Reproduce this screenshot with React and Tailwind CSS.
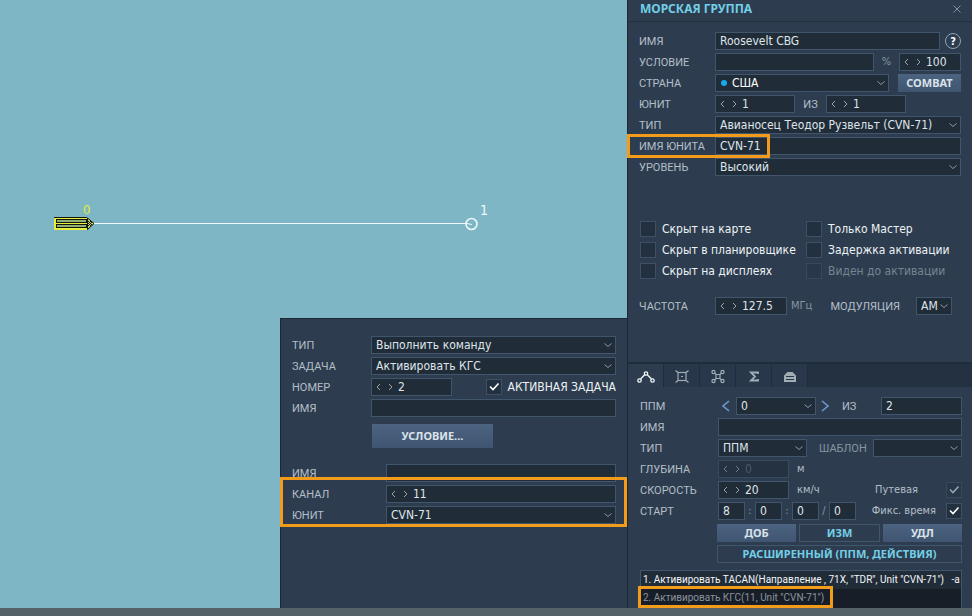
import { useId } from "react";

const fieldBox =
  "h-[18px] min-w-0 rounded-none border border-[#40566c] bg-[#212c39] text-xs leading-4 text-[#dfe5ea] outline-none";

function Caption({ children, className = "", color = "text-[#b4bfc9]", htmlFor }) {
  return (
    <label htmlFor={htmlFor} className={`shrink-0 whitespace-nowrap pt-0.5 font-[Roboto,sans-serif] text-[11px] leading-4 ${color} ${className}`}>
      {children}
    </label>
  );
}

function Row({ children, className = "" }) {
  return <div className={`flex h-[18px] items-center ${className}`}>{children}</div>;
}

function TextField({ id, value = "", label, className = "" }) {
  return <input id={id} aria-label={label} type="text" defaultValue={value} className={`${fieldBox} px-1 ${className}`} />;
}

function Chevron({ d, className = "" }) {
  return (
    <svg viewBox="0 0 8 8" className={`h-2 w-2 fill-none stroke-current ${className}`} aria-hidden="true">
      <path d={d} strokeWidth="1" />
    </svg>
  );
}

function Spinner({ id, value, label, className = "", disabled = false }) {
  return (
    <div className={`${fieldBox} flex items-center pl-[3px] ${className} ${disabled ? "opacity-60" : ""}`}>
      <button type="button" aria-label="−" disabled={disabled} className="text-[#98a5b1]">
        <Chevron d="M5 1 L2 4 L5 7" />
      </button>
      <button type="button" aria-label="+" disabled={disabled} className="ml-[3px] text-[#98a5b1]">
        <Chevron d="M3 1 L6 4 L3 7" />
      </button>
      <input
        id={id}
        aria-label={label}
        type="text"
        defaultValue={value}
        disabled={disabled}
        className={`ml-1 w-0 min-w-0 flex-1 bg-transparent outline-none ${disabled ? "text-[#5d6c7a]" : ""}`}
      />
    </div>
  );
}

function Select({ id, value, label, className = "", text = "text-[#c3ccd4]", pad = "pl-1", dot = false, disabled = false }) {
  return (
    <div className={`relative flex min-w-0 ${className}`}>
      <select id={id} aria-label={label} disabled={disabled} className={`${fieldBox} w-full appearance-none opacity-100 ${pad} ${text}`}>
        <option>{value}</option>
      </select>
      {dot && <span className="pointer-events-none absolute left-[6px] top-[6px] h-[6px] w-[6px] rounded-full bg-[#16a9ee]" />}
      <Chevron d="M0.5 2.5 L4 5.5 L7.5 2.5" className="pointer-events-none absolute right-1 top-[5px] text-[#8b98a5]" />
    </div>
  );
}

function Tick({ id, checked = false, dim = false }) {
  return (
    <span className="relative flex h-4 w-4 shrink-0">
      <input
        id={id}
        type="checkbox"
        defaultChecked={checked}
        className={`peer h-4 w-4 appearance-none border ${dim ? "border-[#38495b] bg-[#283749]" : "border-[#3d5065] bg-[#223040]"}`}
      />
      <svg
        viewBox="0 0 16 16"
        className={`pointer-events-none absolute inset-0 hidden fill-none stroke-current peer-checked:block ${dim ? "text-[#98a3ad]" : "text-white"}`}
        aria-hidden="true"
      >
        <path d="M4 7.5 L7 10.5 L12.5 4.5" strokeWidth="1.6" />
      </svg>
    </span>
  );
}

function Option({ children, disabled = false }) {
  const id = useId();
  return (
    <Row className="gap-1.5">
      <Tick id={id} dim={disabled} />
      <label htmlFor={id} className={`whitespace-nowrap text-xs leading-4 ${disabled ? "text-[#768492]" : "text-[#eef2f5]"}`}>
        {children}
      </label>
    </Row>
  );
}

const solid = "bg-linear-to-b from-[#4c6381] to-[#3f5571] text-[#dbe3ea]";
const outline = "border border-[#40566c] text-[#73cfe6]";

function Button({ children, height = "h-[18px]", className = "" }) {
  return (
    <button type="button" className={`flex ${height} items-center justify-center whitespace-nowrap font-['Noto_Sans',sans-serif] text-[11px] font-bold leading-4 ${className}`}>
      {children}
    </button>
  );
}

function Highlight({ className }) {
  return <div className={`pointer-events-none absolute border-3 border-[#f39c1c] ${className}`} />;
}

function MapView() {
  return (
    <svg className="absolute left-0 top-0 h-[280px] w-[620px]" aria-hidden="true">
      <path d="M94 223.5 H468" stroke="#eef8fa" strokeWidth="1" />
      <circle cx="471.5" cy="224" r="5.5" fill="none" stroke="#eef8fa" strokeWidth="1.6" />
      <path d="M467 223.5 L472 224.5" stroke="#eef8fa" />
      <path d="M54 217.5 H87" stroke="#14180c" />
      <rect x="54.5" y="218.5" width="32" height="11" fill="#e6ee3c" stroke="#e6ee3c" />
      <rect x="56.5" y="219.5" width="30" height="3" fill="#8fae78" stroke="#14180c" />
      <rect x="56.5" y="224.5" width="30" height="3" fill="#8fae78" stroke="#14180c" />
      <path d="M87.5 218 L94 223.5 L87.5 229.5 Z" fill="#cfd65a" stroke="#14180c" />
      <path d="M88 221.5 h1 M90 221.5 h1 M89 222.5 h1 M91 222.5 h1 M88 223.5 h1 M90 223.5 h1 M89 224.5 h1 M91 224.5 h1 M88 225.5 h1 M90 225.5 h1" stroke="#14180c" />
      <text x="83" y="214" fontSize="13" fill="#e0ee3a">0</text>
      <text x="480" y="215" fontSize="14" fill="#eef8fa">1</text>
    </svg>
  );
}

function TaskWindow() {
  return (
    <section className="absolute bottom-0 right-0 h-[290px] w-[347px] border-l border-t border-[#1c2835] bg-[#2d3d4f] pl-[11px] pr-[11px] pt-[17px]">
      <div className="flex flex-col gap-[3px]">
        <Row>
          <Caption htmlFor="t-type" className="w-[79px]">ТИП</Caption>
          <Select id="t-type" value="Выполнить команду" className="flex-1" />
        </Row>
        <Row>
          <Caption htmlFor="t-task" className="w-[79px]">ЗАДАЧА</Caption>
          <Select id="t-task" value="Активировать КГС" className="flex-1" />
        </Row>
        <Row>
          <Caption htmlFor="t-num" className="w-[79px]">НОМЕР</Caption>
          <Spinner id="t-num" value="2" className="w-[81px]" />
          <div className="ml-auto flex items-center gap-1.5">
            <Tick id="t-active" checked />
            <label htmlFor="t-active" className="whitespace-nowrap text-xs leading-4 text-[#eef2f5]">АКТИВНАЯ ЗАДАЧА</label>
          </div>
        </Row>
        <Row>
          <Caption htmlFor="t-name" className="w-[79px]">ИМЯ</Caption>
          <TextField id="t-name" className="flex-1" />
        </Row>
      </div>
      <Button height="h-6" className={`ml-20 mt-[7px] w-[121px] ${solid}`}>УСЛОВИЕ...</Button>
      <div className="mt-4 flex flex-col gap-[3px]">
        <Row>
          <Caption htmlFor="t-name2" className="w-[94px]">ИМЯ</Caption>
          <TextField id="t-name2" className="flex-1" />
        </Row>
        <Row>
          <Caption htmlFor="t-chan" className="w-[94px]">КАНАЛ</Caption>
          <Spinner id="t-chan" value="11" className="flex-1" />
        </Row>
        <Row>
          <Caption htmlFor="t-unit" className="w-[94px]">ЮНИТ</Caption>
          <Select id="t-unit" value="CVN-71" className="flex-1" />
        </Row>
      </div>
      <Highlight className="-left-px right-0 bottom-[81px] h-[50px]" />
    </section>
  );
}

const icons = [
  <g key="route" fill="none" strokeWidth="1.3">
    <circle cx="2.5" cy="13.5" r="1.7" />
    <circle cx="15.5" cy="13.5" r="1.7" />
    <circle cx="9" cy="6.5" r="1.7" />
    <path d="M3.5 12 L7.7 7.7 M10.3 7.7 L14.5 12" />
  </g>,
  <g key="target" fill="none" strokeWidth="1.2">
    <rect x="5" y="5.5" width="8" height="8" />
    <path d="M2.5 3.5 L5 5.5 M15.5 3.5 L13 5.5 M2.5 15.5 L5 13.5 M15.5 15.5 L13 13.5 M8 9.5 h2" />
  </g>,
  <g key="group" fill="none" strokeWidth="1.2">
    <path d="M7 7.5 H11 V11.5 H7 Z M7 7.5 L5.5 6 M11 7.5 L12.5 6 M7 11.5 L5.5 13 M11 11.5 L12.5 13" />
    <circle cx="4.5" cy="5" r="1.6" />
    <circle cx="13.5" cy="5" r="1.6" />
    <circle cx="4.5" cy="14" r="1.6" />
    <circle cx="13.5" cy="14" r="1.6" />
  </g>,
  <path key="sum" fill="none" strokeWidth="1.8" d="M13 7 V5.5 H6 L10 9.5 L6 13.5 H13 V12" />,
  <g key="depot" stroke="none" fill="currentColor">
    <path d="M3 8.5 L6.5 5 H11.5 L15 8.5 V15 H3 Z" />
    <path d="M5 9.5 H13 M5 12.5 H13" stroke="#28384a" strokeWidth="1" />
  </g>,
];
const tabNames = ["Маршрут", "Цели", "Группа", "Сводка", "Склад"];

function Tabs() {
  return (
    <nav className="flex h-[25px] border-t-2 border-[#1f2c3a] bg-[#233140]">
      {icons.map((icon, i) => (
        <button
          key={tabNames[i]}
          type="button"
          aria-label={tabNames[i]}
          className={`flex w-9 items-center justify-center border-r border-[#1f2c3a] ${i === 0 ? "bg-[#2d3d4f] text-[#f2f5f7]" : "bg-[#28384a] text-[#a2acb5]"}`}
        >
          <svg viewBox="0 0 18 18" className="h-[18px] w-[18px] stroke-current" aria-hidden="true">{icon}</svg>
        </button>
      ))}
    </nav>
  );
}

function GroupPanel() {
  return (
    <aside className="flex w-[345px] shrink-0 flex-col border-l border-[#1c2835] bg-[#2d3d4f]">
      <header className="flex h-[22px] items-center justify-between border-b border-[#22303f] pb-1 pl-3 pr-[11px]">
        <h1 className="font-['Noto_Sans',sans-serif] text-xs font-bold text-[#73cfe6]">МОРСКАЯ ГРУППА</h1>
        <button type="button" aria-label="Закрыть" className="text-[#8593a0]">
          <Chevron d="M0.5 0.5 L7.5 7.5 M7.5 0.5 L0.5 7.5" />
        </button>
      </header>

      <div className="flex flex-col gap-[3px] pl-[11px] pr-[11px] pt-[10px]">
        <Row>
          <Caption htmlFor="g-name" className="w-[76px]">ИМЯ</Caption>
          <TextField id="g-name" value="Roosevelt CBG" className="flex-1" />
          <button type="button" className="ml-[5px] flex h-4 w-4 shrink-0 items-center justify-center rounded-full border border-[#8fa3b5] text-[11px] font-bold leading-none text-white">?</button>
        </Row>
        <Row>
          <Caption htmlFor="g-cond" className="w-[76px]">УСЛОВИЕ</Caption>
          <TextField id="g-cond" className="flex-1" />
          <span className="w-[25px] text-center text-[11px] text-[#8795a2]">%</span>
          <Spinner value="100" label="Вероятность" className="w-[62px]" />
        </Row>
        <Row>
          <Caption htmlFor="g-country" className="w-[76px]">СТРАНА</Caption>
          <Select id="g-country" value="США" dot pad="pl-4" text="text-white" className="flex-1" />
          <Button className={`ml-[9px] w-[63px] ${solid}`}>COMBAT</Button>
        </Row>
        <Row>
          <Caption htmlFor="g-unit" className="w-[76px]">ЮНИТ</Caption>
          <Spinner id="g-unit" value="1" className="w-20" />
          <Caption htmlFor="g-total" className="w-[31px] text-center">ИЗ</Caption>
          <Spinner id="g-total" value="1" className="w-20" />
        </Row>
        <Row>
          <Caption htmlFor="g-type" className="w-[76px]">ТИП</Caption>
          <Select id="g-type" value="Авианосец Теодор Рузвельт (CVN-71)" className="flex-1" />
        </Row>
        <Row className="relative">
          <Caption htmlFor="g-uname" className="w-[76px]">ИМЯ ЮНИТА</Caption>
          <TextField id="g-uname" value="CVN-71" className="flex-1" />
          <Highlight className="-left-3 -top-[3px] h-6 w-[143px]" />
        </Row>
        <Row>
          <Caption htmlFor="g-level" className="w-[76px]">УРОВЕНЬ</Caption>
          <Select id="g-level" value="Высокий" className="flex-1" />
        </Row>
      </div>

      <div className="mt-11 flex pl-3">
        <div className="flex w-[166px] flex-col gap-[3px]">
          <Option>Скрыт на карте</Option>
          <Option>Скрыт в планировщике</Option>
          <Option>Скрыт на дисплеях</Option>
        </div>
        <div className="flex flex-col gap-[3px]">
          <Option>Только Мастер</Option>
          <Option>Задержка активации</Option>
          <Option disabled>Виден до активации</Option>
        </div>
      </div>

      <Row className="mt-[17px] pl-[11px] pr-5">
        <Caption htmlFor="g-freq" className="w-[76px]">ЧАСТОТА</Caption>
        <Spinner id="g-freq" value="127.5" className="w-[72px]" />
        <span className="ml-1 text-[11px] text-[#8795a2]">МГц</span>
        <Caption htmlFor="g-mod" className="ml-auto mr-4">МОДУЛЯЦИЯ</Caption>
        <Select id="g-mod" value="AM" className="w-9" />
      </Row>

      <div className="mt-[47px]">
        <Tabs />
      </div>

      <div className="flex flex-col gap-[3px] pl-3 pr-[10px] pt-[10px]">
        <Row>
          <Caption htmlFor="w-num" className="w-[81px]">ППМ</Caption>
          <button type="button" aria-label="Назад" className="text-[#6d9bd0]">
            <svg viewBox="0 0 10 12" className="h-3 w-[10px] fill-none stroke-current"><path d="M8 1 L2 6 L8 11" strokeWidth="1.6" /></svg>
          </button>
          <Select id="w-num" value="0" className="ml-[5px] w-20" />
          <button type="button" aria-label="Вперёд" className="ml-1 text-[#6d9bd0]">
            <svg viewBox="0 0 10 12" className="h-3 w-[10px] fill-none stroke-current"><path d="M2 1 L8 6 L2 11" strokeWidth="1.6" /></svg>
          </button>
          <Caption htmlFor="w-total" className="ml-3">ИЗ</Caption>
          <TextField id="w-total" value="2" className="ml-auto w-[81px]" />
        </Row>
        <Row>
          <Caption htmlFor="w-name" className="w-[78px]">ИМЯ</Caption>
          <TextField id="w-name" className="flex-1" />
        </Row>
        <Row>
          <Caption htmlFor="w-type" className="w-[78px]">ТИП</Caption>
          <Select id="w-type" value="ППМ" className="w-[89px]" />
          <Caption htmlFor="w-tpl" className="ml-3" color="text-[#8795a2]">ШАБЛОН</Caption>
          <Select id="w-tpl" value="" disabled className="ml-auto w-[89px]" />
        </Row>
        <Row>
          <Caption htmlFor="w-depth" className="w-[78px]">ГЛУБИНА</Caption>
          <Spinner id="w-depth" value="0" disabled className="w-[71px]" />
          <span className="ml-2 text-[11px] text-[#b4bfc9]">м</span>
        </Row>
        <Row>
          <Caption htmlFor="w-speed" className="w-[78px]">СКОРОСТЬ</Caption>
          <Spinner id="w-speed" value="20" className="w-[71px]" />
          <span className="ml-2 text-[11px] text-[#b4bfc9]">км/ч</span>
          <label htmlFor="w-ground" className="ml-auto mr-7 text-[11px] text-[#b4bfc9]">Путевая</label>
          <Tick id="w-ground" checked dim />
        </Row>
        <Row>
          <Caption htmlFor="w-h" className="w-[78px]">СТАРТ</Caption>
          <TextField id="w-h" value="8" className="w-[27px]" />
          <span className="w-[10px] text-center text-[11px] text-[#8795a2]">:</span>
          <TextField value="0" label="Минуты" className="w-[27px]" />
          <span className="w-[10px] text-center text-[11px] text-[#8795a2]">:</span>
          <TextField value="0" label="Секунды" className="w-[27px]" />
          <span className="w-[10px] text-center text-[11px] text-[#8795a2]">/</span>
          <TextField value="0" label="Дни" className="w-[27px]" />
          <label htmlFor="w-fix" className="ml-auto mr-[10px] whitespace-nowrap text-[11px] text-[#b4bfc9]">Фикс. время</label>
          <Tick id="w-fix" checked />
        </Row>
        <div className="mt-px flex flex-col gap-[3px] pl-[77px]">
          <div className="flex gap-[3px]">
            <Button className={`flex-1 ${solid}`}>ДОБ</Button>
            <Button className={`flex-1 ${outline}`}>ИЗМ</Button>
            <Button className={`flex-1 ${solid}`}>УДЛ</Button>
          </div>
          <Button className={outline}>РАСШИРЕННЫЙ (ППМ, ДЕЙСТВИЯ)</Button>
        </div>
      </div>

      <div className="relative ml-3 mr-[10px] mt-[7px] flex-1">
        <ul className="h-full overflow-hidden border border-b-0 border-[#40566c] bg-[#171e28] font-[Roboto,sans-serif] text-[10px] leading-[18px]">
          <li className="whitespace-pre bg-[#212c39] pl-[2px] text-[#f2f5f7]">{'1. Активировать TACAN(Направление , 71X, "TDR", Unit "CVN-71")   -a'}</li>
          <li className="whitespace-pre pl-[2px] text-[#8b949d]">2. Активировать КГС(11, Unit "CVN-71")</li>
        </ul>
        <Highlight className="-left-[2px] bottom-0 h-[22px] w-[195px]" />
      </div>
    </aside>
  );
}

export default function App() {
  return (
    <div className="flex min-h-screen flex-col bg-[#566366] font-['DejaVu_Sans_Condensed','DejaVu_Sans',sans-serif]">
      <div className="flex flex-1">
        <main className="relative flex-1 overflow-hidden bg-[#7eb6c6]">
          <MapView />
          <TaskWindow />
        </main>
        <GroupPanel />
      </div>
      <footer className="h-2" />
    </div>
  );
}
